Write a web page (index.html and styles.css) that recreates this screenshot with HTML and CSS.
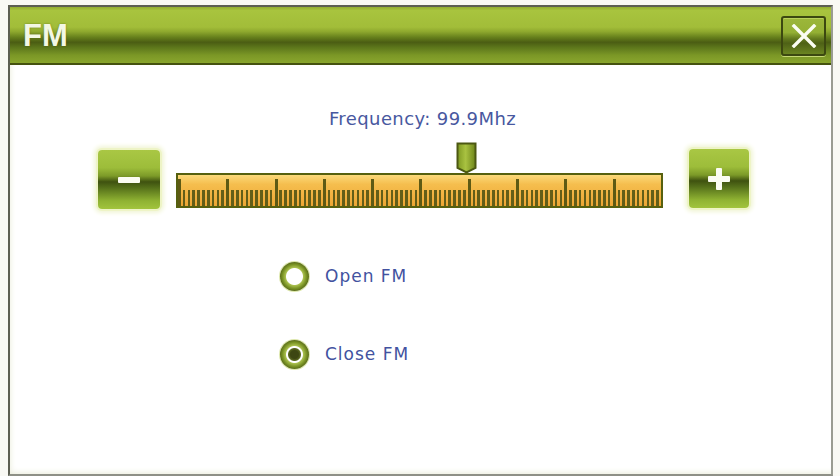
FILE: index.html
```html
<!DOCTYPE html>
<html lang="en">
<head>
  <meta charset="UTF-8" />
  <title>FM</title>
  <link rel="stylesheet" href="styles.css">
</head>
<body>

  <div class="window">
    <div class="titlebar">
      <span class="title">FM</span>
      <button class="close-btn" aria-label="Close">
        <svg width="26" height="24" viewBox="0 0 26 24">
          <path d="M3 2 L23 22 M23 2 L3 22" stroke="#fbfdf2" stroke-width="3.4" stroke-linecap="square"/>
        </svg>
      </button>
    </div>

    <div class="content">
      <div class="freq-label">Frequency: 99.9Mhz</div>

      <div class="slider-row">
        <button class="step-btn minus" aria-label="Down">
          <span class="bar-h"></span>
        </button>

        <div class="track-wrap">
          <svg class="thumb" width="21" height="32" viewBox="0 0 21 32">
            <defs>
              <linearGradient id="thumbFill" x1="0" y1="0" x2="1" y2="0">
                <stop offset="0" stop-color="#7f9a22"/>
                <stop offset="0.45" stop-color="#a9c241"/>
                <stop offset="1" stop-color="#6d8419"/>
              </linearGradient>
            </defs>
            <path d="M1.5 1.5 H19.5 V26 L10.5 30.5 L1.5 26 Z" fill="url(#thumbFill)" stroke="#4c5812" stroke-width="2"/>
          </svg>
          <div class="track">
            <div class="ticks"></div>
          </div>
        </div>

        <button class="step-btn plus" aria-label="Up">
          <span class="bar-h"></span>
          <span class="bar-v"></span>
        </button>
      </div>

      <div class="options">
        <label class="option">
          <span class="radio"></span>
          <span class="option-text">Open FM</span>
        </label>
        <label class="option">
          <span class="radio checked"></span>
          <span class="option-text">Close FM</span>
        </label>
      </div>
    </div>
  </div>

</body>
</html>
```

FILE: styles.css
```css
* {
  box-sizing: border-box;
  margin: 0;
  padding: 0;
}

body {
  background: #f9f9f4;
  width: 840px;
  height: 476px;
  overflow: hidden;
  font-family: "DejaVu Sans", Verdana, sans-serif;
}

.window {
  margin: 5px 0 0 8px;
  width: 825px;
  height: 471px;
  border: 2px solid #5d5f52;
  border-right-color: #9a9c92;
  border-bottom-color: #8e9086;
  background: #fff;
  display: flex;
  flex-direction: column;
}

.titlebar {
  height: 58px;
  flex-shrink: 0;
  display: flex;
  align-items: center;
  justify-content: space-between;
  padding: 0 5px 0 13px;
  border-bottom: 2px solid #45520f;
  background: linear-gradient(to bottom,
    #93ad30 0%,
    #a8c43e 6%,
    #a2bd39 36%,
    #8ea82e 44%,
    #66801c 54%,
    #4b5d13 63%,
    #5c761b 72%,
    #7b9726 86%,
    #8aa62d 100%);
}

.title {
  font-family: "Liberation Sans", Arial, sans-serif;
  font-weight: bold;
  font-size: 31px;
  color: #f3f7e4;
  text-shadow: 0 0 2px rgba(60, 75, 10, 0.6);
  margin-top: 2px;
}

.close-btn {
  width: 45px;
  height: 40px;
  border: 2px solid #3c4810;
  border-radius: 3px;
  display: flex;
  align-items: center;
  justify-content: center;
  margin-top: 2px;
  background: linear-gradient(to bottom,
    #9cb73a 0%,
    #94b034 40%,
    #62791d 58%,
    #4e6116 70%,
    #6b8421 100%);
  box-shadow: inset 0 1px 0 #b9d05a, 0 1px 0 #c5d774;
}

.content {
  flex: 1;
  display: flex;
  flex-direction: column;
  align-items: center;
  box-shadow: inset 3px -4px 6px -3px #e9ebd8;
}

.freq-label {
  margin-top: 43px;
  height: 22px;
  line-height: 22px;
  font-size: 18px;
  letter-spacing: 0.4px;
  color: #4858a0;
  padding-left: 4px;
}

.slider-row {
  display: flex;
  align-items: flex-end;
  margin-top: 13px;
  height: 66px;
  align-self: flex-start;
  margin-left: 88px;
}

.step-btn {
  width: 62px;
  height: 59px;
  border: none;
  border-radius: 4px;
  position: relative;
  display: flex;
  align-items: center;
  justify-content: center;
  background: linear-gradient(to bottom,
    #a9c744 0%,
    #9dbd3a 30%,
    #7c9a28 44%,
    #3f5210 54%,
    #55701a 64%,
    #8fb232 86%,
    #a2c43d 100%);
  box-shadow: 0 0 0 2px #eef4c6, 0 0 4px 4px #f1f5d6;
}

.step-btn.minus {
  margin-right: 16px;
}

.step-btn.plus {
  width: 60px;
  margin-left: 26px;
  margin-bottom: 1px;
}

.bar-h {
  width: 22px;
  height: 6px;
  background: #fbfcf2;
  border-radius: 1px;
}

.bar-v {
  position: absolute;
  left: 50%;
  top: 50%;
  width: 6px;
  height: 22px;
  margin: -11px 0 0 -3px;
  background: #fbfcf2;
  border-radius: 1px;
}

.track-wrap {
  width: 487px;
  height: 66px;
  position: relative;
  display: flex;
  flex-direction: column;
  justify-content: flex-end;
  margin-bottom: 1px;
}

.thumb {
  position: absolute;
  left: 280px;
  top: 0;
}

.track {
  height: 35px;
  border: 2px solid #56600f;
  background: linear-gradient(to bottom, #fbd97a 0%, #f5be4e 30%, #eda634 100%);
  padding-top: 4px;
}

.ticks {
  height: 100%;
  background:
    repeating-linear-gradient(to right, #5e5a14 0 3px, transparent 3px 48.3px) left bottom / 100% 27px no-repeat,
    repeating-linear-gradient(to right, #635e18 0 2.6px, transparent 2.6px 4.83px) left bottom / 100% 16px no-repeat;
}

.options {
  align-self: flex-start;
  margin-left: 270px;
  margin-top: 52px;
  display: flex;
  flex-direction: column;
  gap: 48px;
}

.option {
  display: flex;
  align-items: center;
  height: 30px;
}

.radio {
  width: 29px;
  height: 29px;
  border-radius: 50%;
  background: radial-gradient(circle, #ffffff 0 8px, #a9bf4d 9px, #7a9325 12px, #5a6d17 14.5px);
  box-shadow: 0 0 0 1px #dde7ac;
  margin-right: 16px;
}

.radio.checked {
  background: radial-gradient(circle, #3d4612 0 4px, #5a6720 6px, #ffffff 7px 8px, #a9bf4d 9px, #7a9325 12px, #5a6d17 14.5px);
}

.option-text {
  font-size: 17px;
  letter-spacing: 1px;
  color: #4252a0;
}
```
